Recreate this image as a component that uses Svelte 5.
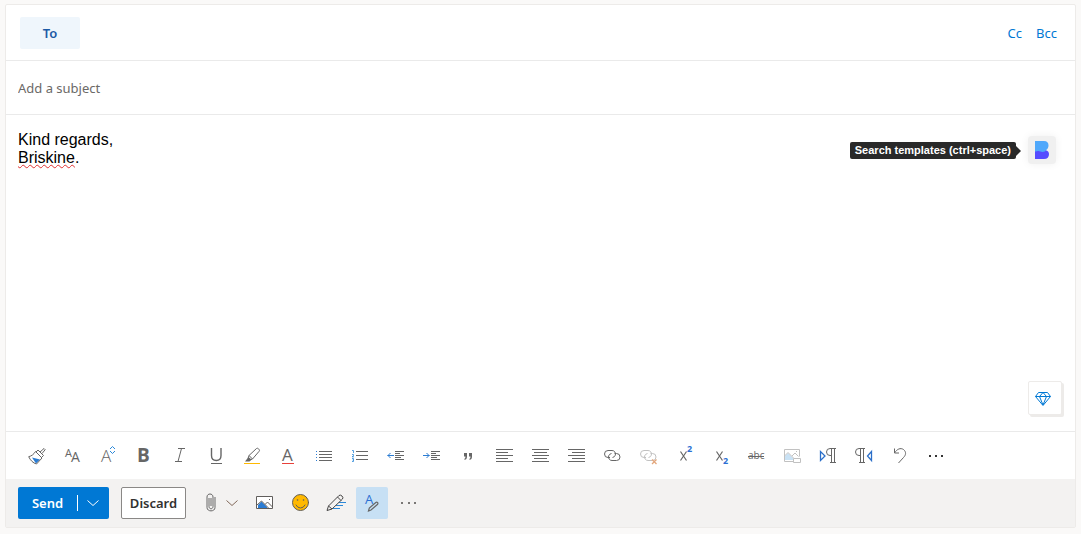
<script>
    let to = '';
    let subject = '';
    let formatting = true;

    const tools = [
        'Format painter', 'Font', 'Font size', 'Bold', 'Italic', 'Underline', 'Highlight',
        'Font color', 'Bullets', 'Numbering', 'Decrease indent', 'Increase indent', 'Quote',
        'Align left', 'Align center', 'Align right', 'Insert link', 'Remove link',
        'Superscript', 'Subscript', 'Strikethrough', 'Picture size', 'Left-to-right',
        'Right-to-left', 'Undo', 'More formatting options'
    ];

    // x range of the short lines for each alignment
    const align = {
        'Align left': [10, 22],
        'Align center': [12, 25],
        'Align right': [14, 27]
    };
</script>

<div class="page">
    <form class="compose" on:submit|preventDefault>
        <div class="row recipients">
            <button type="button" class="to">To</button>
            <input class="field" aria-label="To" bind:value={to}>
            <a href="#cc">Cc</a>
            <a href="#bcc">Bcc</a>
        </div>

        <div class="row">
            <input class="field" aria-label="Add a subject" placeholder="Add a subject" bind:value={subject}>
        </div>

        <div class="editor">
            <div class="body" contenteditable="true" role="textbox" aria-label="Message body" tabindex="0" spellcheck="false">
                <div>Kind regards,</div>
                <div><span class="misspelled">Briskine</span>.</div>
            </div>
            <div class="addons">
                <div class="templates">
                    <span class="tooltip" role="tooltip" id="templates-tip">Search templates (ctrl+space)</span>
                    <button type="button" class="briskine" aria-label="Search templates" aria-describedby="templates-tip">
                        <svg width="28" height="28" viewBox="0 0 28 28">
                            <path d="M7 14h10.500q3.500 1 3.500 4 0 5-5 5h-9z" fill="#554cff"/>
                            <path d="M7 5h9q4.500 0 4.500 4.500c0 2-.800 3.300-2 4.300-1 1.600-2.500 2.200-4 2.200-1.700 0-2.500-1-4-1-1.400 0-2 .600-3.500.600z" fill="#4fa8fb"/>
                        </svg>
                    </button>
                </div>
                <button type="button" class="gem" aria-label="Premium">
                    <svg width="28" height="32" viewBox="0 0 28 32" fill="none" stroke="#0078d4" stroke-linejoin="round">
                        <path d="M9.500 10.500h9l3 4L14 23.500l-7.500-9zM6.500 14.500h15M10.500 14.500L14 23l3.500-8.500M10.500 14.500l3.500-4 3.500 4"/>
                    </svg>
                </button>
            </div>
        </div>

        <div class="toolbar" role="toolbar" aria-label="Formatting">
            {#each tools as tool}
                <button type="button" aria-label={tool}>
                    <svg width="36" height="40" viewBox="0 0 36 40" fill="none" stroke="#666" stroke-width="1">
                        {#if tool === 'Format painter'}
                            <path d="M14 22.500l8 2-4 4z" fill="#2b7cd3" stroke="none"/>
                            <path d="M17.500 16.500l6.500 6.500-5.500 6c-3.500-1-6-3.500-7.800-7.300 2.800-.700 5-2.200 6.800-5.200z"/>
                            <path d="M18 17l2-2 5.500 5.500-2 2M22 17l4-3.500 1.200 1.200L24 18.500"/>
                        {:else if tool === 'Font'}
                            <text x="11" y="22" font-size="11" class="glyph">A</text>
                            <text x="17" y="27" font-size="14" class="glyph">A</text>
                        {:else if tool === 'Font size'}
                            <text x="11" y="27" font-size="17" class="glyph light">A</text>
                            <path d="M20 14l2.500-2.500 2.500 2.500M20 16l2.500 2.500 2.500-2.500" stroke="#2b88d8"/>
                        {:else if tool === 'Bold'}
                            <text x="11" y="27" font-size="19" class="glyph bold">B</text>
                        {:else if tool === 'Italic'}
                            <path d="M16 13.500h7M13 26.500h7M19.500 13.500l-3.500 13"/>
                        {:else if tool === 'Underline'}
                            <path d="M13.500 13v7.500c0 3.500 1.700 5 4.800 5s4.700-1.500 4.700-5V13" stroke-width="1.400"/>
                            <path d="M13 28.500h11"/>
                        {:else if tool === 'Highlight'}
                            <path d="M10 28.500h16" stroke="#ffb900"/>
                            <path d="M15 20.500l7.500-7q1-.700 2 .300l.500.600q1 1 0 2L18.500 24zM15 20.500l-1 3 2 1.500 2.500-1"/>
                            <path d="M14.500 22l3 2.500-2 2H11z" fill="#666" stroke="none"/>
                        {:else if tool === 'Font color'}
                            <text x="12" y="26" font-size="17" class="glyph">A</text>
                            <path d="M12 28.500h12" stroke="#e8403a"/>
                        {:else if tool === 'Bullets'}
                            <path d="M13 16.500h13M13 19.500h13M13 22.500h13M13 25.500h13"/>
                            <path d="M10 16.500h1M10 19.500h1M10 22.500h1M10 25.500h1" stroke="#2b7cd3"/>
                        {:else if tool === 'Numbering'}
                            <path d="M14 16.500h12M14 20.500h12M14 24.500h12"/>
                            <path d="M10 15.500h1.500V18M10 19.500h1.500v1.300l-1.500 1h2M10 23.500h1.500v3H10M10.500 25h1" stroke="#2b88d8" stroke-width=".8"/>
                        {:else if tool === 'Decrease indent' || tool === 'Increase indent'}
                            <path d="M17 16.500h9M17 18.500h5M17 20.500h9M17 22.500h6M17 24.500h9"/>
                            {#if tool === 'Decrease indent'}
                                <path d="M16 20.500H9.500M12.500 18l-2.500 2.500 2.500 2.500" stroke="#2b7cd3"/>
                            {:else}
                                <path d="M9 20.500h6.500M12.500 18l2.500 2.500-2.500 2.500" stroke="#2b7cd3"/>
                            {/if}
                        {:else if tool === 'Quote'}
                            <path d="M14 18h3v3.500q0 3-2.500 3.500v-1.300q1-.500 1-2.200H14zM19 18h3v3.500q0 3-2.500 3.500v-1.300q1-.500 1-2.200H19z" fill="#666" stroke="none"/>
                        {:else if align[tool]}
                            <path d="M10 14.500h17M10 20.500h17M10 26.500h17M{align[tool][0]} 17.500H{align[tool][1]}M{align[tool][0]} 23.500H{align[tool][1]}"/>
                        {:else if tool === 'Insert link' || tool === 'Remove link'}
                            <g opacity={tool === 'Remove link' ? 0.4 : 1}>
                                <path d="M16 22.500h-2a3.500 3.500 0 0 1 0-7h4a3.500 3.500 0 0 1 3.300 4.700q-.800 2-2.800 2.300"/>
                                <path d="M20.500 18.500h2a3.500 3.500 0 0 1 0 7h-4.500a3.500 3.500 0 0 1-3.300-4.700q.800-2 2.800-2.300"/>
                            </g>
                            {#if tool === 'Remove link'}
                                <path d="M22 24.500l4.500 4.500M26.500 24.500l-4.500 4.500" stroke="#e3a77c" stroke-width="1.300"/>
                            {/if}
                        {:else if tool === 'Superscript' || tool === 'Subscript'}
                            <path d="M14.500 16.500l6 9M20.500 16.500l-6 9" stroke-width="1.200"/>
                            <text x="21" y={tool === 'Superscript' ? 17 : 29} font-size="9" class="glyph bold blue">2</text>
                        {:else if tool === 'Strikethrough'}
                            <text x="10" y="24" font-size="10" class="glyph">abc</text>
                            <path d="M10 21.500h16"/>
                        {:else if tool === 'Picture size'}
                            <g opacity=".4">
                                <path d="M11 25v-4l3-3 6 6v1z" fill="#7bb7e8" stroke="none"/>
                                <path d="M19 26.500h-8.500v-12h15v7M10.500 21l3.500-3.500 5.500 5.500M18 21l3-3 3.500 3.500M22 16.500h1M19.500 23.500h7v4h-7z"/>
                            </g>
                        {:else if tool === 'Left-to-right'}
                            <path d="M10.500 16.500v9l4.500-4.500z" stroke="#2b6fc9" stroke-width="1.300"/>
                            <path d="M26 13.500h-6a3.500 3.500 0 0 0 0 7h1.500M21.500 13.500v14M24.500 13.500v14M20 27.500h6"/>
                        {:else if tool === 'Right-to-left'}
                            <path d="M25.500 16.500v9L21.500 21z" stroke="#2b6fc9" stroke-width="1.300"/>
                            <path d="M19 13.500h-6a3.500 3.500 0 0 0 0 7h1.500M14.500 13.500v14M17.500 13.500v14M13 27.500h6"/>
                        {:else if tool === 'Undo'}
                            <path d="M12.500 13.500v4.500h4.500M12.500 18c2.500-4 6-5.500 9-3.500 3 2.500 2.500 5.500 0 8l-5 5.500"/>
                        {:else}
                            <path d="M11 20h2v2h-2zM17 20h2v2h-2zM23 20h2v2h-2z" fill="#333" stroke="none"/>
                        {/if}
                    </svg>
                </button>
            {/each}
        </div>

        <div class="actions">
            <div class="split">
                <button type="submit" class="send">Send</button>
                <button type="button" class="send-more" aria-label="More send options">
                    <svg width="16" height="32" viewBox="0 0 16 32" fill="none" stroke="#fff">
                        <path d="M2.500 13.500l5.500 5 5.500-5"/>
                    </svg>
                </button>
            </div>
            <button type="button" class="discard">Discard</button>
            <div class="attach">
                <button type="button" aria-label="Attach">
                    <svg width="26" height="32" viewBox="0 0 26 32" fill="none" stroke="#666">
                        <path d="M11 11v8.500c0 3 4 3 4 0V10c0-4-6-4-6 0v10.500c0 4.500 8 4.500 8 0V10M13 11v8"/>
                    </svg>
                </button>
                <button type="button" aria-label="Attach options">
                    <svg width="16" height="32" viewBox="0 0 16 32" fill="none" stroke="#82695a">
                        <path d="M2.500 13.500l5.500 5 5.500-5"/>
                    </svg>
                </button>
            </div>
            <button type="button" aria-label="Insert picture">
                <svg width="32" height="32" viewBox="0 0 32 32" fill="none" stroke="#605e5c">
                    <path d="M8.500 9.500h16v12h-16z" fill="#fff"/>
                    <path d="M10 21v-3l3.500-3.500L19 20v1z" fill="#2b7cd3" stroke="none"/>
                    <path d="M9 18l4.500-4 7 7M17 17.500l2.500-2.500 5 5M21 12.500h1"/>
                </svg>
            </button>
            <button type="button" aria-label="Insert emoji">
                <svg width="32" height="32" viewBox="0 0 32 32" fill="none" stroke="#605e5c" stroke-linecap="round">
                    <circle cx="16.500" cy="15.500" r="8" fill="#ffb900"/>
                    <path d="M12 18q1.500 3 4.500 3t4.500-3"/>
                    <path d="M13.500 13h.1M19.500 13h.1" stroke-width="1.500"/>
                </svg>
            </button>
            <button type="button" aria-label="Signature">
                <svg width="32" height="32" viewBox="0 0 32 32" fill="none" stroke="#444">
                    <path d="M18 15.500h8M16 18.500h7M13 21.500h7" stroke="#2b88d8"/>
                    <path d="M8.500 19L19 8.500q1.500-1 3 .500t.500 3L12 22l-5 1.500zM8.500 19l3.500 3M17.500 10l3.500 3.500" fill="#f3f2f1"/>
                </svg>
            </button>
            <button type="button" class:active={formatting} aria-label="Formatting options" aria-pressed={formatting} on:click={() => formatting = !formatting}>
                <svg width="32" height="32" viewBox="0 0 32 32" fill="none" stroke="#666">
                    <text x="9" y="17" font-size="13" class="glyph blue">A</text>
                    <path d="M12.500 24l.800-3 6.500-5.500q1-.700 1.800.200.700 1-.200 1.800L15 23z" fill="#c7e0f4" stroke-width="1.200"/>
                </svg>
            </button>
            <button type="button" aria-label="More options">
                <svg width="32" height="32" viewBox="0 0 32 32" fill="#797775">
                    <path d="M9 15h2v2H9zM16 15h2v2h-2zM22 15h2v2h-2z"/>
                </svg>
            </button>
        </div>
    </form>
</div>

<style>
:global(body) {
    margin: 0;
    background: #faf9f8;
}

.page {
    box-sizing: border-box;
    display: flex;
    height: 100vh;
    min-height: 360px;
    padding: 4px 5px 6px;
    font: 14px/20px "Noto Sans", sans-serif;
    color: #323130;
}

.compose {
    flex: 1;
    min-width: 0;
    display: flex;
    flex-direction: column;
    background: #fff;
    border: 1px solid #edebe9;
    border-radius: 2px;
}

button {
    padding: 0;
    border: 0;
    background: none;
    font: inherit;
    color: inherit;
    cursor: pointer;
}

svg {
    display: block;
}

.row {
    box-sizing: border-box;
    height: 54px;
    display: flex;
    align-items: center;
    gap: 14px;
    padding: 0 12px;
    border-bottom: 1px solid #eaeaea;
}

.recipients {
    height: 56px;
    padding: 0 18px 0 14px;
}

.to {
    width: 60px;
    height: 32px;
    border-radius: 2px;
    background: #eff6fc;
    color: #1b5aa5;
    font-size: 13px;
    font-weight: 600;
}

.field {
    flex: 1;
    min-width: 0;
    padding: 0;
    border: 0;
    outline: 0;
    background: none;
    font: inherit;
    font-size: 13px;
    color: inherit;
}

.field::placeholder {
    color: #6b6967;
    opacity: 1;
}

a {
    color: #0078d4;
    font-size: 13px;
    text-decoration: none;
}

.editor {
    flex: 1;
    min-height: 0;
    display: flex;
    border-bottom: 1px solid #eaeaea;
}

.body {
    flex: 1;
    padding: 16px 12px;
    outline: 0;
    overflow: auto;
    font: 16px/18px "Liberation Sans", sans-serif;
    color: #000;
}

.misspelled {
    text-decoration: underline wavy #e03030 1px;
    text-decoration-skip-ink: none;
    text-underline-offset: 1px;
}

.addons {
    display: flex;
    flex-direction: column;
    justify-content: space-between;
    align-items: flex-end;
    padding: 21px 13px 16px 0;
}

.templates {
    display: flex;
    align-items: center;
    gap: 12px;
    padding-right: 6px;
}

.tooltip {
    position: relative;
    padding: 0 5px;
    border-radius: 2px;
    background: #292929;
    color: #fff;
    font: bold 11px/17px "Liberation Sans", sans-serif;
}

.tooltip::after {
    content: "";
    position: absolute;
    left: 100%;
    top: 4px;
    border: 5px solid transparent;
    border-left-color: #292929;
    border-right: 0;
}

.briskine {
    border-radius: 4px;
    background: #f0f0f0;
    box-shadow: 0 0 8px #f0f0f0;
}

.gem {
    padding: 0 4px 0 0;
    border: 1px solid #edebe9;
    border-radius: 2px;
    background: #fff;
    box-shadow: 2px 2px 0 #edebe9;
}

.toolbar {
    display: flex;
    flex-wrap: wrap;
    padding: 3px 12px 4px;
}

.glyph {
    fill: #666;
    stroke: none;
    font-family: "Open Sans", sans-serif;
}

.light {
    font-weight: 300;
}

.bold {
    font-weight: 700;
}

.blue {
    fill: #2b6fd3;
}

.actions {
    display: flex;
    flex-wrap: wrap;
    gap: 4px;
    padding: 8px 12px;
    background: #f3f2f1;
}

.split {
    display: flex;
    align-items: center;
    margin-right: 8px;
    border-radius: 2px;
    background: #0078d4;
    color: #fff;
}

.send, .discard {
    font-size: 13px;
    font-weight: 600;
}

.send {
    width: 59px;
}

.send-more {
    height: 16px;
    display: flex;
    align-items: center;
    padding: 0 8px 0 7px;
    border-left: 1px solid #fff;
}

.discard {
    width: 65px;
    height: 32px;
    margin-right: 8px;
    border: 1px solid #8a8886;
    border-radius: 2px;
    background: #fff;
}

.attach {
    display: flex;
    margin-right: 4px;
}

.active {
    border-radius: 2px;
    background: #c7e0f4;
}
</style>
